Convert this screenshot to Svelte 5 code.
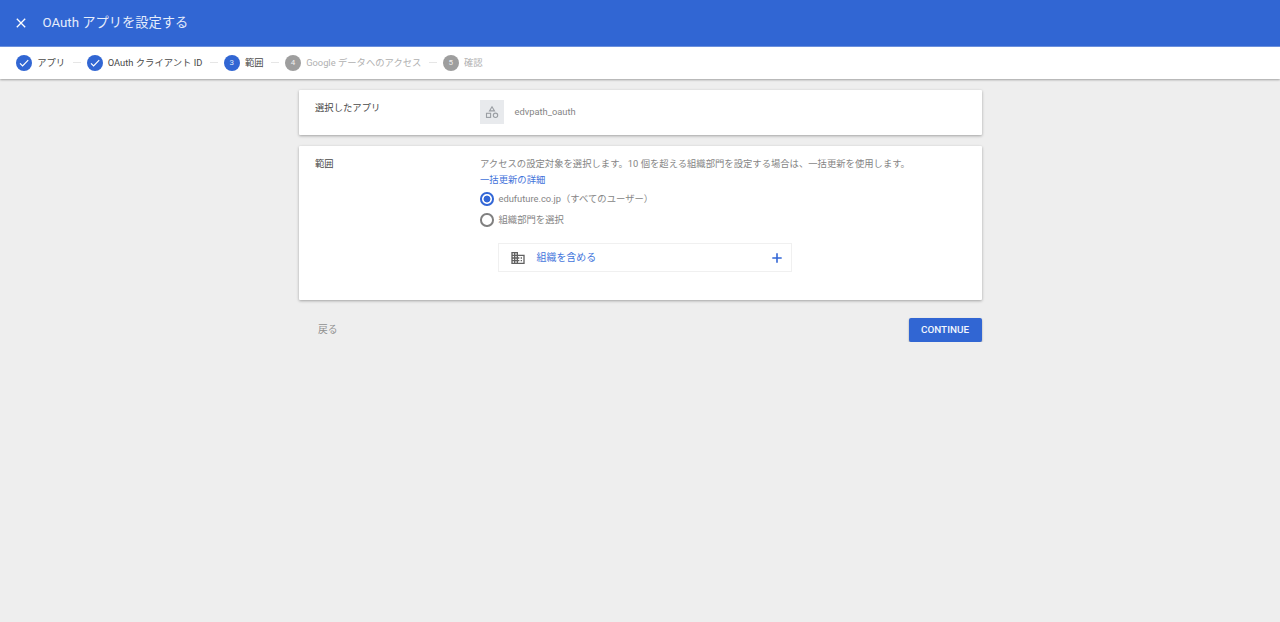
<script lang="ts">
  type Step = { label: string; status: "done" | "current" | "pending" };

  const steps: Step[] = [
    { label: "アプリ", status: "done" },
    { label: "OAuth クライアント ID", status: "done" },
    { label: "範囲", status: "current" },
    { label: "Google データへのアクセス", status: "pending" },
    { label: "確認", status: "pending" },
  ];

  let scope = $state<"all" | "units">("all");
</script>

<header>
  <button class="close" aria-label="閉じる">
    <svg viewBox="0 0 10 10" width="10" height="10">
      <path d="M.8.8l8.4 8.4M9.2.8L.8 9.2" fill="none" stroke="#fff" stroke-width="1.3" />
    </svg>
  </button>
  <h1>OAuth アプリを設定する</h1>
</header>

<nav>
  {#each steps as step, i}
    {#if i > 0}
      <span class="line"></span>
    {/if}
    <div class="step {step.status}">
      <span class="circle">
        {#if step.status === "done"}
          <svg viewBox="0 0 16 16" width="16" height="16">
            <path d="M4 8.3l2.6 2.6L12.2 5.2" fill="none" stroke="#fff" stroke-width="1.2" />
          </svg>
        {:else}
          {i + 1}
        {/if}
      </span>
      <span class="label">{step.label}</span>
    </div>
  {/each}
</nav>

<main>
  <section class="card app">
    <h2>選択したアプリ</h2>
    <div class="selected">
      <span class="app-icon">
        <svg viewBox="0 0 14 14" width="14" height="14">
          <g fill="none" stroke="#9a9ea3" stroke-width="1.1">
            <path d="M7 1.8l2.5 4.1h-5z" />
            <rect x="1.5" y="8.3" width="4.1" height="4.1" />
            <circle cx="10.5" cy="10.3" r="2.2" />
          </g>
        </svg>
      </span>
      <span class="name">edvpath_oauth</span>
    </div>
  </section>

  <section class="card scope">
    <h2>範囲</h2>
    <div class="body">
      <p>アクセスの設定対象を選択します。10 個を超える組織部門を設定する場合は、一括更新を使用します。</p>
      <a href="#details">一括更新の詳細</a>
      <label>
        <input type="radio" bind:group={scope} value="all" />
        edufuture.co.jp（すべてのユーザー）
      </label>
      <label>
        <input type="radio" bind:group={scope} value="units" />
        組織部門を選択
      </label>
      <button class="include">
        <svg viewBox="0 0 24 24" width="16" height="16">
          <path
            fill="#616161"
            d="M12 7V3H2v18h20V7H12zM6 19H4v-2h2v2zm0-4H4v-2h2v2zm0-4H4V9h2v2zm0-4H4V5h2v2zm4 12H8v-2h2v2zm0-4H8v-2h2v2zm0-4H8V9h2v2zm0-4H8V5h2v2zm10 12h-8v-2h2v-2h-2v-2h2v-2h-2V9h8v10zm-2-8h-2v2h2v-2zm0 4h-2v2h2v-2z"
          />
        </svg>
        <span>組織を含める</span>
        <svg class="plus" viewBox="0 0 10 10" width="10" height="10">
          <path d="M5 .3v9.4M.3 5h9.4" fill="none" stroke="#3367d6" stroke-width="1.6" />
        </svg>
      </button>
    </div>
  </section>

  <div class="actions">
    <button class="back">戻る</button>
    <button class="continue">CONTINUE</button>
  </div>
</main>

<style>
  :global(body) {
    background: #eee;
    font-family: Roboto, "Noto Sans CJK JP", sans-serif;
    font-size: 9.33px;
    color: #858585;
  }

  button {
    padding: 0;
    border: none;
    background: none;
    font: inherit;
    cursor: pointer;
  }

  svg {
    display: block;
  }

  header {
    display: flex;
    align-items: center;
    gap: 16.5px;
    height: 47px;
    padding-left: 16px;
    background: #3166d3;
    border-bottom: 1px solid #6e94e2;
    box-sizing: border-box;
  }

  h1 {
    margin: 0 0 1px;
    color: #e6edfb;
    font-size: 13.25px;
    font-weight: 400;
    line-height: 20px;
  }

  nav {
    display: flex;
    align-items: center;
    height: 32px;
    padding: 0 0 1px 16px;
    background: #fff;
    box-shadow: 0 1px 2px rgba(0, 0, 0, 0.32);
    box-sizing: border-box;
  }

  .step {
    display: flex;
    align-items: center;
    gap: 5.2px;
    color: #484848;
    line-height: 16px;
    white-space: nowrap;
  }

  .circle {
    width: 16px;
    height: 16px;
    border-radius: 50%;
    background: #3166d3;
    color: #dce6fa;
    font-size: 8px;
    text-align: center;
  }

  .pending {
    color: #b0b0b0;
  }

  .pending .circle {
    background: #9e9e9e;
    color: #eee;
  }

  .line {
    width: 8px;
    height: 1px;
    margin: 0 6px 0 7.4px;
    background: #e6e6e6;
  }

  main {
    width: 682.5px;
    margin: 11px 0 0 299px;
  }

  .card {
    display: flex;
    padding-left: 16px;
    background: #fff;
    border-radius: 1px;
    box-shadow: 0 1px 3px rgba(0, 0, 0, 0.32);
    box-sizing: border-box;
  }

  .app {
    height: 44.5px;
    margin-bottom: 11.5px;
    padding-top: 10px;
  }

  .scope {
    height: 154px;
    padding-top: 10px;
  }

  h2 {
    width: 165px;
    margin: 0;
    color: #484848;
    font-size: 9.33px;
    font-weight: 400;
    line-height: 16px;
  }

  .selected {
    display: flex;
    align-items: center;
    gap: 10.5px;
    height: 24px;
  }

  .app-icon {
    display: flex;
    align-items: center;
    justify-content: center;
    width: 24px;
    height: 24px;
    background: #e8eaed;
  }

  .name {
    margin-bottom: 1px;
  }

  .body {
    display: flex;
    flex-direction: column;
    align-items: flex-start;
    line-height: 16px;
  }

  p {
    margin: 0;
    white-space: nowrap;
  }

  a {
    color: #3f72da;
    text-decoration: none;
  }

  label {
    display: flex;
    align-items: center;
    gap: 5px;
    height: 21px;
  }

  input {
    appearance: none;
    width: 13.5px;
    height: 13.5px;
    margin: 1px 0 0;
    border: 2px solid #808080;
    border-radius: 50%;
    box-sizing: border-box;
  }

  input:checked {
    border-color: #3367d6;
    background: radial-gradient(circle, #3367d6 3px, transparent 3.8px);
  }

  .include {
    display: flex;
    align-items: center;
    width: 294px;
    height: 29px;
    margin: 13px 0 0 18px;
    padding: 0 9px 0 11px;
    border: 1px solid #f0f0f0;
    color: #4275dc;
    font-size: 9.95px;
    box-sizing: border-box;
  }

  .include span {
    margin: 1px 0 0 10.5px;
  }

  .plus {
    margin-left: auto;
  }

  .actions {
    display: flex;
    justify-content: space-between;
    align-items: center;
    margin-top: 17.5px;
  }

  .back {
    padding: 0 0 2px 19px;
    color: #909090;
    font-size: 9.8px;
  }

  .continue {
    width: 73px;
    height: 24px;
    padding-bottom: 1px;
    border-radius: 2px;
    background: #3166d3;
    box-shadow: 0 1px 2px rgba(0, 0, 0, 0.35);
    color: #f2f6fd;
    font-size: 9.9px;
    font-weight: 500;
  }
</style>
